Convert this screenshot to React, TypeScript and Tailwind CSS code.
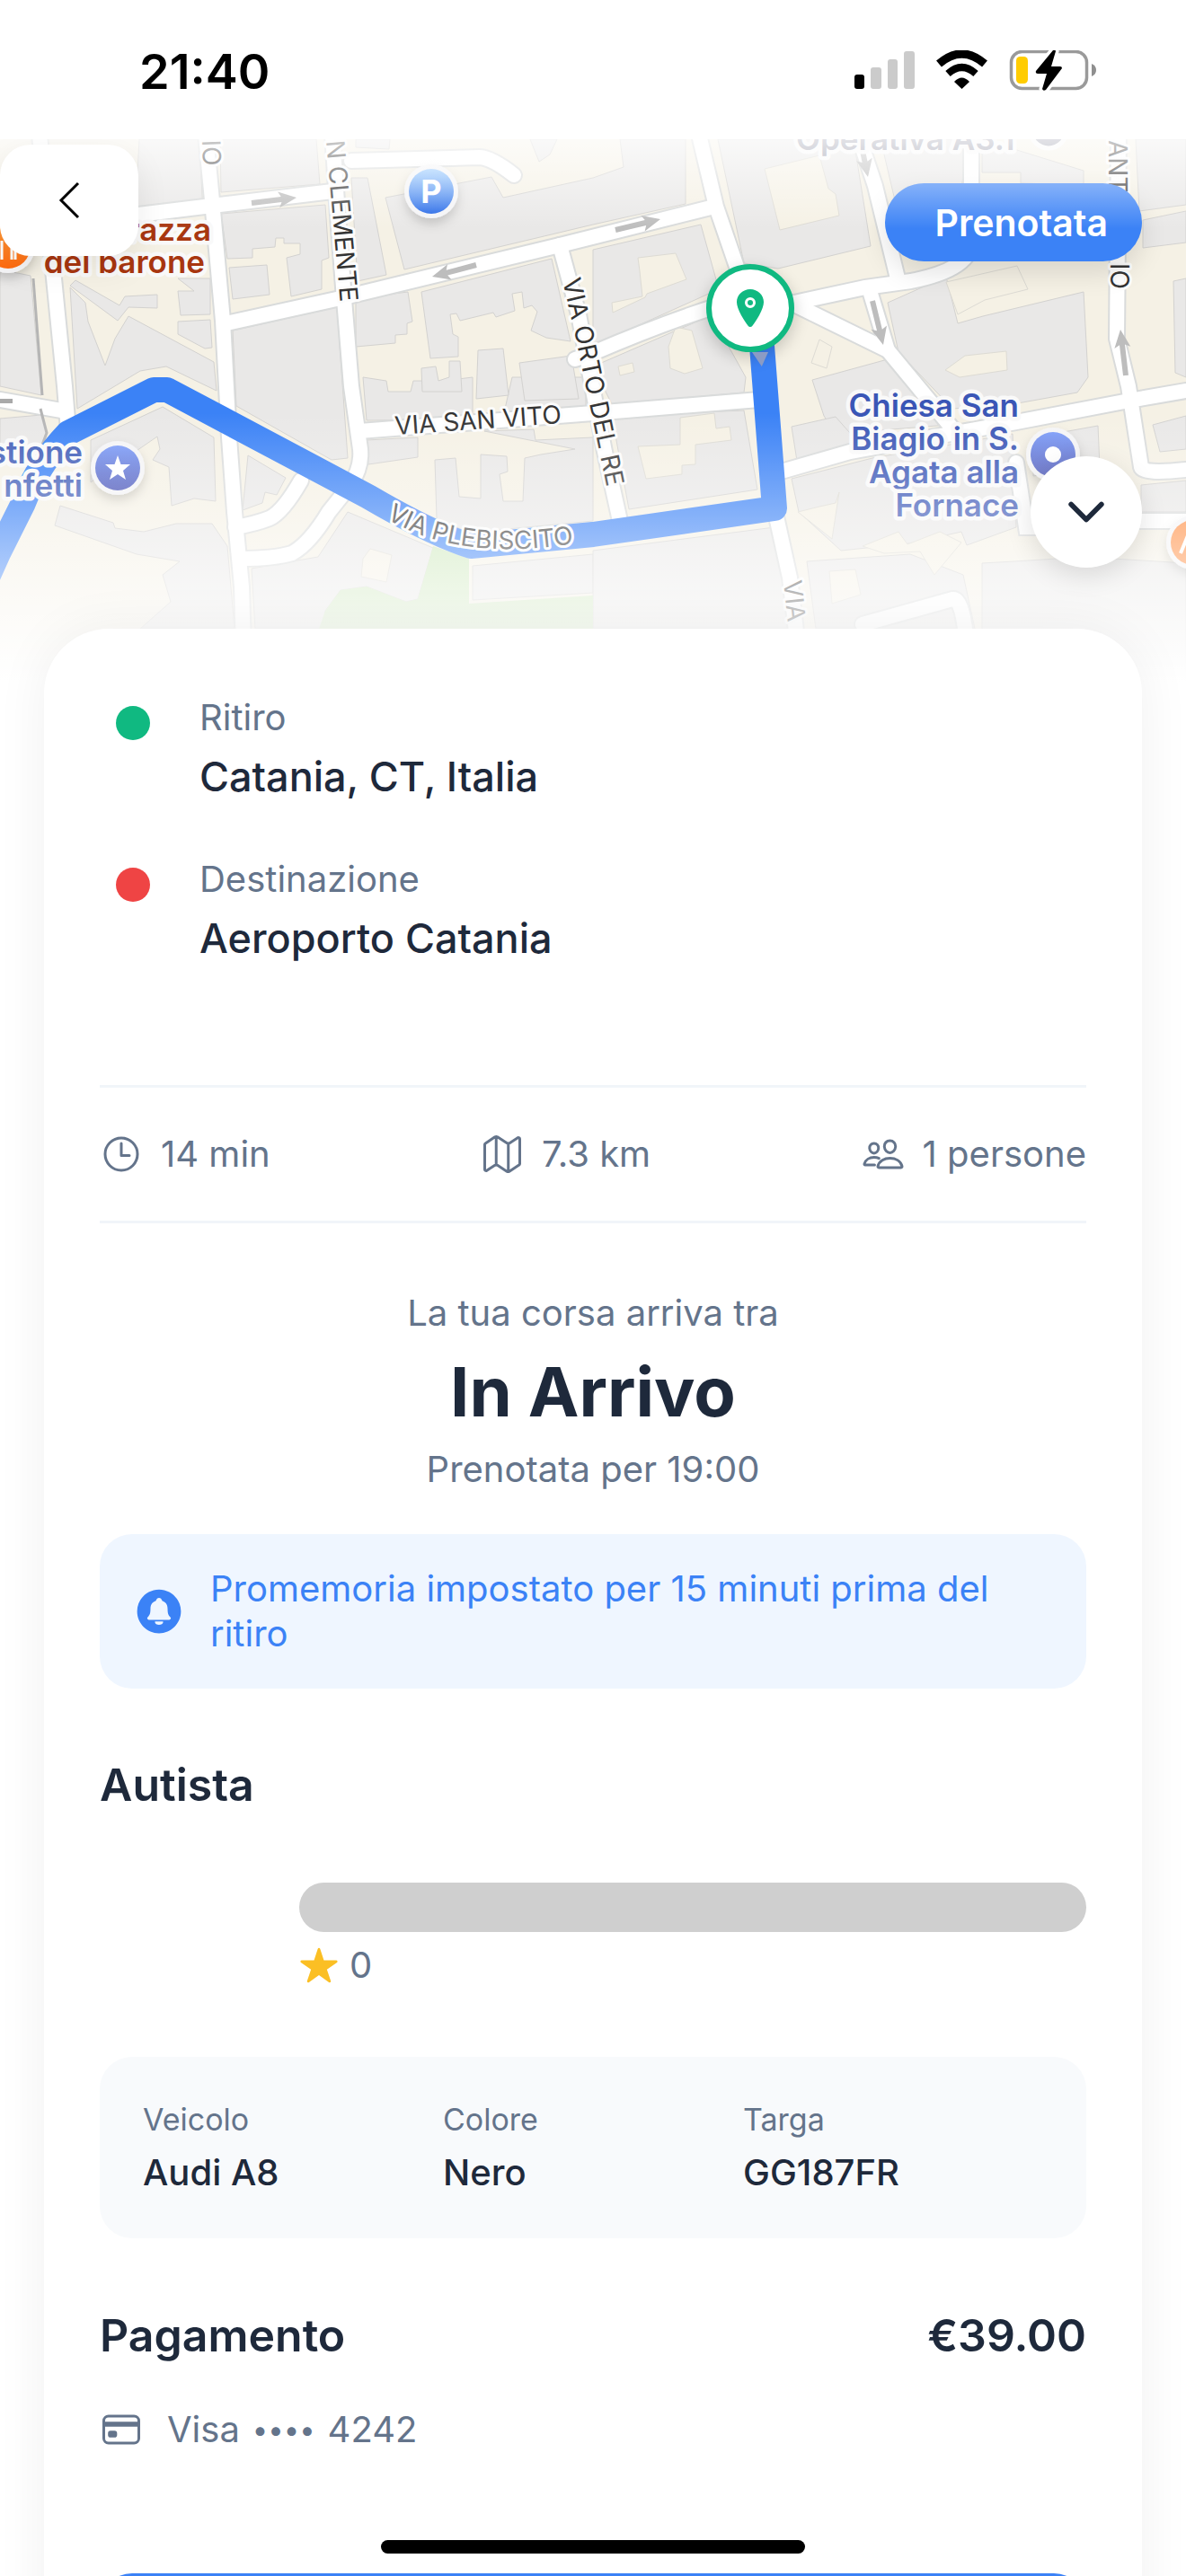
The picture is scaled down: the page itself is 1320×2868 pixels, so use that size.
/**************************************************
    IMPORTS
***************************************************/
import type { ReactNode } from 'react';
import {
    IoCardOutline,
    IoChevronDown,
    IoLocation,
    IoMapOutline,
    IoNotificationsCircle,
    IoPeopleOutline,
    IoStar,
    IoTimeOutline,
} from 'react-icons/io5';

/**************************************************
    TYPES & INTERFACES
***************************************************/
interface StopProps {
    label: string;
    place: string;
    dotColor: string;
}

interface StatProps {
    icon: ReactNode;
    text: string;
}

interface ArrowProps {
    x1: number;
    y1: number;
    x2: number;
    y2: number;
}

/**************************************************
    MAP DATA
***************************************************/
const BUILDINGS = [
    '155,155 222,155 226,238 150,247',
    '245,155 352,155 356,205 246,214',
    '246,238 362,228 366,287 358,290 358,322 324,330 319,287 334,283 334,271 316,271 316,265 307,265 306,275 281,277 281,287 253,288',
    '255,298 297,295 300,328 259,333',
    '259,368 375,342 387,510 369,512 263,452',
    '391,198 409,198 430,306 398,313',
    '396,155 434,155 433,166 396,164',
    '429,220 547,197 560,220 660,198 694,186 690,155 763,155 763,227 660,250 450,300',
    '590,155 600,180 612,172 620,155',
    '396,332 454,325 459,358 453,360 453,372 440,373 440,382 396,386',
    '469,325 614,288 635,380 608,376 591,368 598,347 592,340 583,343 581,325 570,327 573,346 552,353 549,348 512,357 508,349 501,350 504,372 510,375 510,397 479,399',
    '84,312 133,340 139,330 175,328 175,343 143,342 131,357 78,318',
    '143,352 238,403 241,435 185,408 156,413 86,455 78,320 95,337 98,358 117,407 128,377',
    '198,310 234,310 234,350 201,351 198,324 216,324',
    '198,358 234,356 236,387 228,388 198,372',
    '0,300 34,307 46,440 0,430',
    '0,466 46,462 52,480 44,500 0,510',
    '181,453 238,487 240,558 216,555 191,563 188,520 170,512 178,500 175,486 101,537 101,490',
    '67,563 126,582 128,588 160,592 196,583 236,583 253,608 261,700 156,700 190,670 181,640 200,625 152,617 61,585',
    '276,507 318,532 308,551 295,548 292,560 270,568',
    '404,420 430,424 432,436 457,436 460,424 494,424 526,420 526,467 408,468',
    '570,420 652,420 652,458 560,464',
    '469,410 485,408 488,424 500,420 500,402 512,402 514,436 470,436',
    '532,390 560,388 566,440 530,444',
    '578,404 636,396 644,444 584,446',
    '408,490 465,487 465,509 410,517',
    '539,480 594,478 596,490 660,487 660,580 522,593 486,577 484,512 507,510 511,553 535,555 535,506 564,508 565,525 556,528 560,558 582,558 584,510 602,506 640,500',
    '387,570 482,610 465,667 452,670 408,653 379,657 362,680 360,700 284,700 280,633 354,620',
    '526,630 660,617 660,660 526,668',
    '681,463 828,457 843,545 700,567',
    '660,613 862,587 884,700 660,700',
    '799,155 950,155 969,274 866,299 828,293',
    '980,155 1072,155 1072,198 1066,225 1000,240',
    '1093,155 1206,190 1206,206 1136,204 1136,192 1093,192',
    '1264,155 1320,155 1320,228 1268,235',
    '1272,245 1320,235 1320,270 1272,276',
    '660,278 780,250 800,322 660,385',
    '660,408 778,357 790,348 830,420 828,437 681,450',
    '904,423 988,400 1055,473 930,483 917,463',
    '988,337 1053,308 1066,360 1094,352 1206,325 1211,420 1199,437 1127,450 1060,455 1000,392',
    '881,475 930,464 960,498 887,513',
    '881,533 971,510 1127,483 1131,587 1076,607 1070,592 1012,605 936,613 889,570',
    '898,625 1013,617 1072,640 1085,700 908,700',
    '1093,627 1129,625 1207,620 1320,627 1320,760 1093,760',
    '1283,473 1320,463 1320,500 1291,503',
    '1270,540 1320,535 1320,570 1270,570',
    '1306,313 1320,310 1320,420 1308,415',
    '1150,487 1222,474 1224,520 1150,530',
];

const COURTYARDS = [
    '851,188 912,173 922,210 930,216 934,240 868,256',
    '757,465 795,460 797,477 812,475 814,490 774,495 774,517 759,518 759,528 719,533 710,497 757,495',
    '710,287 752,282 764,311 720,327 718,331 682,348 681,337 715,330 712,302',
    '688,408 704,404 706,414 690,418',
    '752,364 770,368 782,410 762,416 746,410 744,386',
    '1053,314 1132,296 1144,322 1096,334 1066,350',
    '1052,412 1074,396 1120,391 1121,412 1068,420',
    '903,404 912,378 926,386 920,410',
    '960,608 1000,592 1010,606 1046,592 1070,604 1040,640 1024,614 984,616',
    '930,560 934,548 926,600 888,570 912,564',
    '923,636 952,634 958,662 926,672',
    '404,622 412,611 436,618 430,648 402,642',
    '404,668 430,672 428,690 400,692',
];

const PARK = '482,608 522,622 522,672 660,663 660,700 355,700 362,680 379,657 408,653 452,670 465,667';

const ROADS = [
    'M44 150 L60 310 L72 430 L76 480',
    'M229 150 L236 223 L248 357 L255 487 L261 570 L269 653 L271 720',
    'M0 258 L154 239 L236 229 L370 213',
    'M370 150 L376 240 L383 333 L391 430 L401 500 Q403 520 390 540 L366 570 Q345 605 325 616 Q305 622 268 622',
    'M335 535 Q315 570 300 577 Q285 583 262 587',
    'M252 360 L379 332 L623 273 L795 230',
    'M391 179 L534 175 Q548 176 572 195',
    'M623 273 L644 350 L673 503 L690 580',
    'M400 480 L660 460 L845 445',
    'M778 150 L797 230 L820 297 L835 343',
    'M835 330 Q760 350 660 393 L640 400',
    'M870 340 L963 320 L1014 313 Q1080 300 1081 270 L1081 150',
    'M955 150 L974 207 L999 310',
    'M870 332 L988 390 L1060 477',
    'M969 327 L988 390',
    'M1245 150 L1243 377 L1256 430 L1270 520 Q1272 528 1320 523',
    'M866 526 L946 503 L1131 470 L1262 445 L1320 435',
    'M1131 515 L1142 587 L1160 587',
    'M864 575 L879 643 L888 720',
    'M1250 580 L1320 580',
    'M0 445 L74 458',
    'M960 695 L1060 667 Q1072 665 1076 720',
];

const ARROWS: ArrowProps[] = [
    { x1: 280, y1: 226, x2: 330, y2: 220 },
    { x1: 530, y1: 295, x2: 481, y2: 308 },
    { x1: 685, y1: 256, x2: 735, y2: 244 },
    { x1: 958, y1: 158, x2: 966, y2: 197 },
    { x1: 971, y1: 335, x2: 983, y2: 384 },
    { x1: 1253, y1: 418, x2: 1247, y2: 367 },
];

const STREET = 'fill-[#333333] stroke-[#fcfcfc] stroke-[6px] text-[28px] [paint-order:stroke] [stroke-linejoin:round]';
const PLACE = 'stroke-[#f9f9f9] stroke-[9px] text-[35px] font-semibold [paint-order:stroke] [stroke-linejoin:round]';

/**************************************************
    COMPONENT CODE
***************************************************/
function StatusBar() {
    return (
        <header className="flex h-[155px] items-center justify-between pt-1 pr-[98px] pl-[155px]">
            <time className="text-[54px] leading-[64px] font-semibold text-black">21:40</time>
            <svg viewBox="950 56 272 48" className="h-12 w-[272px]" aria-hidden="true">
                <rect x="951" y="83" width="11" height="16" rx="3" />
                <rect x="969" y="75" width="12" height="24" rx="3" fill="#cbcbcb" />
                <rect x="988" y="66" width="11" height="33" rx="3" fill="#cbcbcb" />
                <rect x="1006" y="57" width="12" height="42" rx="3" fill="#cbcbcb" />
                <path d="M1045 71 Q1070.500 49 1096 71" fill="none" stroke="#000" strokeWidth="9" />
                <path d="M1055 82 Q1070.500 68 1086 82" fill="none" stroke="#000" strokeWidth="8" />
                <path d="M1062 91 Q1070.500 82 1079 91 L1070.500 99 Z" />
                <rect x="1125.500" y="57.500" width="84" height="41" rx="12" fill="none" stroke="#9a9a9a" strokeWidth="3.500" />
                <path d="M1215 71 Q1220 73 1220 78 Q1220 83 1215 85 Z" fill="#8f8f8f" />
                <rect x="1131" y="63" width="13" height="30" rx="4.500" fill="#ffcc00" />
                <path
                    d="M1172 56 L1153 79 Q1152 82 1155 82 L1165 82 L1160 99 Q1161 102 1164 100 L1182 76 Q1182 74 1180 74 L1170 74 L1175 57 Q1174 54 1172 56 Z"
                    stroke="#fff"
                    strokeWidth="7"
                    paintOrder="stroke"
                />
            </svg>
        </header>
    );
}

function Arrow({ x1, y1, x2, y2 }: ArrowProps) {
    const length = Math.hypot(x2 - x1, y2 - y1);
    const angle = (Math.atan2(y2 - y1, x2 - x1) * 180) / Math.PI;
    return (
        <path
            d={`M0 -3 H${length - 17} L${length - 20} -9 L${length} 0 L${length - 20} 9 L${length - 17} 3 H0 Z`}
            transform={`translate(${x1} ${y1}) rotate(${angle})`}
            fill="#bdbdbd"
        />
    );
}

function CityMap() {
    return (
        <svg
            viewBox="0 155 1320 605"
            preserveAspectRatio="xMidYMin slice"
            className="absolute inset-0 h-full w-full"
            role="img"
            aria-label="Mappa del percorso"
        >
            <defs>
                <linearGradient id="parking" x1="0" y1="0" x2="0" y2="1">
                    <stop offset="0" stopColor="#93c8ff" />
                    <stop offset="1" stopColor="#1f63e6" />
                </linearGradient>
                <linearGradient id="landmark" x1="0" y1="0" x2="0" y2="1">
                    <stop offset="0" stopColor="#7c9cf8" />
                    <stop offset="1" stopColor="#4a55b8" />
                </linearGradient>
                <linearGradient id="food" x1="0" y1="0" x2="0" y2="1">
                    <stop offset="0" stopColor="#ff9d3c" />
                    <stop offset="1" stopColor="#ff6a0f" />
                </linearGradient>
                <filter id="soft" x="-50%" y="-50%" width="200%" height="200%">
                    <feDropShadow dx="0" dy="6" stdDeviation="6" floodOpacity="0.18" />
                </filter>
                <path id="plebiscito" d="M430 577 Q520 632 670 599" />
                <path id="orto" d="M626 312 L640 372 L682 575" />
            </defs>

            {/* blocks */}
            <rect y="155" width="1320" height="605" fill="#f5f1e5" />
            {BUILDINGS.map((points) => (
                <polygon key={points} points={points} fill="#e9e8e7" stroke="#d3d2d0" />
            ))}
            {COURTYARDS.map((points) => (
                <polygon key={points} points={points} fill="#f5f1e5" stroke="#dddbd4" />
            ))}
            <polygon points={PARK} fill="#cde8bb" />

            {/* streets */}
            {ROADS.map((d) => (
                <path key={d} d={d} fill="none" stroke="#d9dbdb" strokeWidth="20" strokeLinecap="round" />
            ))}
            {ROADS.map((d) => (
                <path key={d} d={d} fill="none" stroke="#ffffff" strokeWidth="16" strokeLinecap="round" />
            ))}
            <path d="M37 310 L47 440 M45 455 L52 482 L46 498" fill="none" stroke="#b5b5b5" strokeWidth="3" />
            <rect y="444" width="14" height="5" fill="#a9a9a9" />
            {ARROWS.map((arrow) => (
                <Arrow key={`${arrow.x1}-${arrow.y1}`} {...arrow} />
            ))}

            {/* route */}
            <path
                d="M-20 656 L-2 616 L26 560 Q40 520 76 482 L171 434 L186 434 L410 553 Q480 594 524 608 L660 595 L862 566 L848 385"
                fill="none"
                stroke="#3b82f6"
                strokeWidth="28"
                strokeLinejoin="round"
            />

            {/* street names */}
            <text className={STREET} x="0" y="0" transform="translate(225 156) rotate(88)">IO</text>
            <text className={STREET} x="0" y="0" transform="translate(363 157) rotate(85)">N CLEMENTE</text>
            <text className={STREET} x="0" y="0" transform="translate(440 484) rotate(-4)">VIA SAN VITO</text>
            <text className={STREET}><textPath href="#orto">VIA ORTO DEL RE</textPath></text>
            <text className={STREET}><textPath href="#plebiscito">VIA PLEBISCITO</textPath></text>
            <text className={STREET} x="0" y="0" transform="translate(872 647) rotate(84)">VIA</text>
            <text className={STREET} x="0" y="0" transform="translate(1234 156) rotate(90)">ANT</text>
            <text className={STREET} x="0" y="0" transform="translate(1236 293) rotate(90)">IO</text>

            {/* places */}
            <text className={`${PLACE} fill-[#8b8d9f]`} x="886" y="167">Operativa A3.1</text>
            <circle cx="1167" cy="145" r="20" fill="#8b8d9f" stroke="#f9f9f9" strokeWidth="5" />
            <text className={`${PLACE} fill-[#a8360f]`} x="235" y="268" textAnchor="end">razza</text>
            <text className={`${PLACE} fill-[#a8360f]`} x="228" y="304" textAnchor="end">del barone</text>
            <text className={`${PLACE} fill-[#3f5cb8]`} x="92" y="516" textAnchor="end">stione</text>
            <text className={`${PLACE} fill-[#3f5cb8]`} x="92" y="553" textAnchor="end">nfetti</text>
            <text className={`${PLACE} fill-[#3a56b6]`} textAnchor="end">
                <tspan x="1134" y="464">Chiesa San</tspan>
                <tspan x="1134" y="501">Biagio in S.</tspan>
                <tspan x="1134" y="538">Agata alla</tspan>
                <tspan x="1134" y="575">Fornace</tspan>
            </text>

            <g filter="url(#soft)">
                <circle cx="480" cy="213" r="30" fill="#f4f4f6" />
                <circle cx="131" cy="521" r="30" fill="#f4f4f6" />
                <circle cx="1172" cy="506" r="30" fill="#f4f4f6" />
                <circle cx="9" cy="274" r="30" fill="#f4f4f6" />
                <circle cx="1328" cy="604" r="30" fill="#f4f4f6" />
            </g>
            <circle cx="480" cy="213" r="25" fill="url(#parking)" />
            <text x="480" y="226" textAnchor="middle" className="fill-white text-[36px] font-bold">P</text>
            <circle cx="131" cy="521" r="25" fill="url(#landmark)" />
            <path d="M131 507 L134.500 517 L145 517 L137 524 L140 534 L131 528 L122 534 L125 524 L117 517 L127.500 517 Z" fill="#fff" />
            <circle cx="1172" cy="506" r="25" fill="url(#landmark)" />
            <circle cx="1172" cy="506" r="9" fill="#fff" />
            <circle cx="9" cy="274" r="25" fill="url(#food)" />
            <path d="M2 268 V289 M13 268 V289 M17 268 V289" stroke="#fff" strokeWidth="3" />
            <circle cx="1328" cy="604" r="25" fill="#ff8a3c" />
            <path d="M1314 616 L1323 594" stroke="#fff" strokeWidth="4" />
        </svg>
    );
}

function MapHeader() {
    return (
        <section className="relative h-[605px] overflow-hidden">
            <CityMap />

            {/* pickup pin */}
            <div className="absolute top-[139px] left-[786px] flex size-[98px] items-center justify-center rounded-full border-[6px] border-[#10b981] bg-white shadow-[0_6px_18px_rgba(0,0,0,0.2)]">
                <IoLocation className="size-12 text-[#10b981]" />
            </div>
            <div className="absolute top-[237px] left-[837px] h-4 w-[18px] bg-[#8b9bc4] [clip-path:polygon(0_0,100%_0,60%_100%)]" />

            <div className="absolute top-[49px] right-[49px] flex h-[87px] items-center rounded-full bg-[#3b82f6] pr-[38px] pl-[55px] text-[41px] leading-[50px] font-semibold text-white shadow-[0_12px_30px_rgba(0,0,0,0.12)]">
                Prenotata
            </div>

            <div className="absolute inset-x-0 top-0 h-[100px] bg-linear-to-b from-white/75 to-transparent" />
            <div className="absolute inset-x-0 bottom-0 h-[300px] bg-linear-to-b from-transparent to-white" />

            <button
                type="button"
                aria-label="Indietro"
                className="absolute top-[6px] left-0 flex h-[124px] w-[154px] items-center justify-center rounded-[34px] bg-white shadow-[0_12px_36px_rgba(0,0,0,0.08)]"
            >
                <svg viewBox="0 0 24 44" className="h-11 w-6" aria-hidden="true">
                    <path d="M22 3 L3 22 L22 41" fill="none" stroke="#000" strokeWidth="3" />
                </svg>
            </button>
            <button
                type="button"
                aria-label="Riduci"
                className="absolute top-[353px] right-[49px] flex size-[124px] items-center justify-center rounded-full bg-white shadow-[0_8px_30px_rgba(0,0,0,0.12)]"
            >
                <IoChevronDown className="size-[60px] text-[#1e293b]" />
            </button>
        </section>
    );
}

function Stop({ label, place, dotColor }: StopProps) {
    return (
        <li className="flex gap-[55px] pl-[18px]">
            <span className={`mt-3 size-[38px] rounded-full ${dotColor}`} />
            <div className="flex flex-col gap-3">
                <span className="text-[40px] leading-[50px] text-[#64748b]">{label}</span>
                <span className="text-[45px] leading-[58px] font-medium text-[#1e293b]">{place}</span>
            </div>
        </li>
    );
}

function Stat({ icon, text }: StatProps) {
    return (
        <div className="flex items-center gap-5">
            {icon}
            <span>{text}</span>
        </div>
    );
}

function VehicleItem({ label, value }: { label: string; value: string }) {
    return (
        <div className="flex flex-col gap-3">
            <dt className="text-[34px] leading-[44px] text-[#64748b]">{label}</dt>
            <dd className="text-[40px] leading-[50px] font-medium text-[#1e293b]">{value}</dd>
        </div>
    );
}

/**************************************************
    RENDER COMPONENT
***************************************************/
export default function App() {
    return (
        <div className="relative h-screen overflow-hidden bg-white font-['Inter',sans-serif]">
            <StatusBar />
            <MapHeader />

            <main className="relative mx-[49px] -mt-[60px] rounded-t-[72px] bg-white px-[62px] pt-[74px] pb-[72px] shadow-[0_0_60px_rgba(0,0,0,0.06)]">
                {/* **************************************************    TRIP    ************************************************** */}
                <ul className="flex flex-col gap-[60px]">
                    <Stop label="Ritiro" place="Catania, CT, Italia" dotColor="bg-[#10b981]" />
                    <Stop label="Destinazione" place="Aeroporto Catania" dotColor="bg-[#ef4444]" />
                </ul>

                <div className="mt-[134px] flex justify-between border-y-[3px] border-[#f1f5f9] py-12 text-[40px] leading-[52px] text-[#64748b]">
                    <Stat icon={<IoTimeOutline className="size-12" />} text="14 min" />
                    <Stat icon={<IoMapOutline className="size-12" />} text="7.3 km" />
                    <Stat icon={<IoPeopleOutline className="size-12" />} text="1 persone" />
                </div>

                {/* **************************************************    ARRIVAL    ************************************************** */}
                <section className="mt-[75px] flex flex-col gap-[14px] text-center text-[40px] leading-[50px] text-[#64748b]">
                    <p>La tua corsa arriva tra</p>
                    <h1 className="text-[76px] leading-[96px] font-bold text-[#1e293b]">In Arrivo</h1>
                    <p>Prenotata per 19:00</p>
                </section>

                <div className="mt-[47px] flex items-center gap-[27px] rounded-[36px] bg-[#eff6ff] p-9 text-[40px] leading-[50px] text-[#3b82f6]">
                    <IoNotificationsCircle className="size-[60px] shrink-0" />
                    <p>Promemoria impostato per 15 minuti prima del ritiro</p>
                </div>

                {/* **************************************************    DRIVER    ************************************************** */}
                <h2 className="mt-[75px] text-[50px] leading-[64px] font-semibold text-[#1e293b]">Autista</h2>
                <div className="my-[77px] flex flex-col gap-3 pl-[222px]">
                    <div className="h-[55px] rounded-full bg-[#cfcfcf]" />
                    <div className="flex items-center gap-3 text-[40px] leading-[50px] text-[#64748b]">
                        <IoStar className="size-[44px] text-[#fbbf24]" />
                        <span>0</span>
                    </div>
                </div>
                <dl className="grid grid-cols-3 rounded-[36px] bg-[#f8fafc] p-12">
                    <VehicleItem label="Veicolo" value="Audi A8" />
                    <VehicleItem label="Colore" value="Nero" />
                    <VehicleItem label="Targa" value="GG187FR" />
                </dl>

                {/* **************************************************    PAYMENT    ************************************************** */}
                <div className="mt-[76px] flex justify-between text-[50px] leading-[64px] font-semibold text-[#1e293b]">
                    <h2>Pagamento</h2>
                    <span>€39.00</span>
                </div>
                <div className="mt-12 flex items-center gap-[27px] text-[40px] leading-[50px] text-[#64748b]">
                    <IoCardOutline className="size-12" />
                    <span className="flex items-center gap-[14px]">
                        Visa <span className="text-[31px]">••••</span> 4242
                    </span>
                </div>

                <button type="button" aria-label="Contatta autista" className="mt-[135px] h-[156px] w-full rounded-[36px] bg-[#3b82f6]" />
            </main>

            <div className="absolute bottom-[25px] left-1/2 h-[15px] w-[472px] -translate-x-1/2 rounded-full bg-black" />
        </div>
    );
}
